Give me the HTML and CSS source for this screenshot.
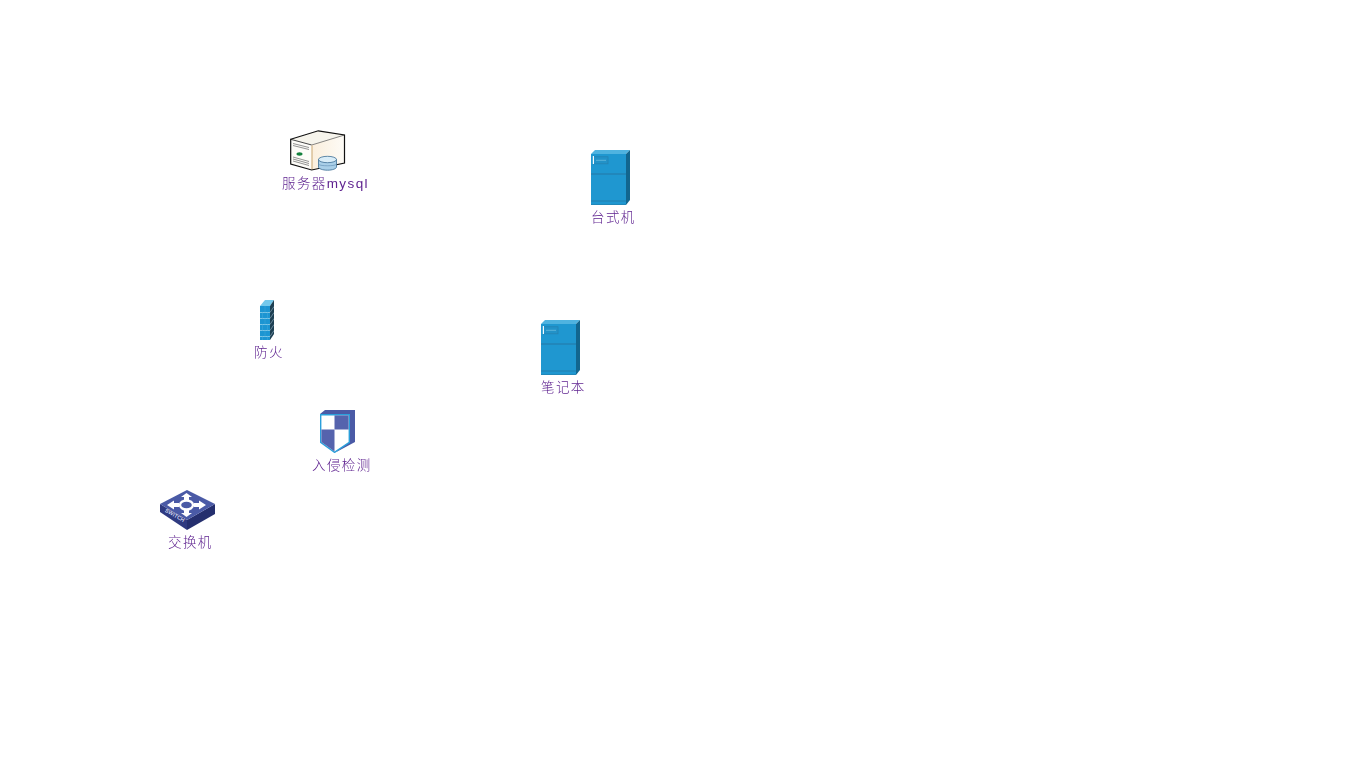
FILE: index.html
```html
<!DOCTYPE html>
<html lang="zh">
<head>
<meta charset="utf-8">
<title>网络拓扑</title>
<link rel="stylesheet" href="styles.css">
</head>
<body>
<main class="canvas">
  <svg class="defs" aria-hidden="true">
    <symbol id="cabinet" viewBox="0 0 39 55">
      <polygon points="0,4 4,0 39,0 35,4" fill="#4fb3e0"/>
      <polygon points="35,4 39,0 39,50 35,55" fill="#12668f"/>
      <rect x="0" y="4" width="35" height="51" fill="#1f97d0"/>
      <rect x="2.500" y="6.800" width="14.500" height="7" fill="#2292c8" stroke="#2582b2" stroke-width=".8"/>
      <rect x="1.800" y="6" width="1.200" height="8" fill="#f2fafd"/>
      <rect x="5" y="9.800" width="10" height="1" fill="#5cb4da"/>
      <rect x="0" y="23.500" width="35" height="1" fill="#2479a6"/>
      <rect x="0" y="50.500" width="35" height="1" fill="#2280ae"/>
      <rect x="0" y="54" width="35" height="1" fill="#2088b9"/>
    </symbol>
    <linearGradient id="server-side" x1="0" y1="0" x2="1" y2="0">
      <stop offset="0" stop-color="#fbefdd"/>
      <stop offset="1" stop-color="#fdfbf6"/>
    </linearGradient>
  </svg>

  <figure class="node node-server">
    <svg class="icon icon-server" viewBox="0 0 56 41">
      <polygon points="0.700,9.300 28.300,0.800 54.500,5 21.700,15" fill="#f6f4ec"/>
      <polygon points="21.700,15 54.500,5 54.500,33 21.700,40" fill="url(#server-side)"/>
      <polygon points="0.700,9.300 21.700,15 21.700,40 0.700,34" fill="#fdfcf8"/>
      <path d="M0.700 9.300L21.700 15" stroke="#333" stroke-width=".9" fill="none"/>
      <path d="M21.700 15L54.500 5" stroke="#555" stroke-width=".7" fill="none"/>
      <path d="M22 15.500V39.500" stroke="#d2b284" stroke-width="1.200"/>
      <path d="M0.700 9.300L28.300 0.800L54.500 5V33L21.700 40L0.700 34Z" stroke="#111" stroke-width="1.200" fill="none"/>
      <path d="M3 13.500l16 4M3 15.500l16 4M3 27l16 4.500M3 29l16 4.500M3 31l16 4.500" stroke="#666" stroke-width=".7" fill="none"/>
      <ellipse cx="9.500" cy="24" rx="3" ry="1.700" fill="#13803c"/>
      <path d="M28.500 29.500v7.500c0 1.700 4 3.200 9 3.200s9-1.500 9-3.200v-7.500z" fill="#a9cfe8" stroke="#3c6d94" stroke-width=".8"/>
      <ellipse cx="37.500" cy="29.500" rx="9" ry="3.200" fill="#d9edf8" stroke="#3c6d94" stroke-width=".8"/>
      <path d="M28.800 34.500c2 1.700 15.400 1.700 17.400 0" fill="none" stroke="#5e8cb0" stroke-width=".6"/>
    </svg>
    <figcaption class="label">服务器mysql</figcaption>
  </figure>

  <figure class="node node-desktop">
    <svg class="icon icon-cabinet"><use href="#cabinet"/></svg>
    <figcaption class="label">台式机</figcaption>
  </figure>

  <figure class="node node-firewall">
    <svg class="icon icon-firewall" viewBox="0 0 14 40">
      <polygon points="0,6 5,0 14,0 10,6" fill="#74c9ec"/>
      <polygon points="10,6 14,0 14,34 10,40" fill="#1d3f52"/>
      <rect x="0" y="6" width="10" height="34" fill="#1c95d2"/>
      <path d="M0 12.500H10M0 18.500H10M0 24.500H10M0 30.500H10M0 36.500H10" stroke="#86cbe9" stroke-width=".9" fill="none"/>
      <path d="M5 6V12.500M2.500 12.500V18.500M7.500 12.500V18.500M5 18.500V24.500M2.500 24.500V30.500M7.500 24.500V30.500M5 30.500V36.500M2.500 36.500V40M7.500 36.500V40" stroke="#3aa4d8" stroke-width=".6" fill="none"/>
      <path d="M10 12.500L14 6.500M10 18.500L14 12.500M10 24.500L14 18.500M10 30.500L14 24.500M10 36.500L14 30.500" stroke="#7f9dae" stroke-width=".8" fill="none"/>
    </svg>
    <figcaption class="label">防火</figcaption>
  </figure>

  <figure class="node node-notebook">
    <svg class="icon icon-cabinet"><use href="#cabinet"/></svg>
    <figcaption class="label">笔记本</figcaption>
  </figure>

  <figure class="node node-ids">
    <svg class="icon icon-shield" viewBox="0 0 35 43">
      <polygon points="0,4 5,0 35,0 35,32 14.500,43 29,32 29,4" fill="#4a5aa6"/>
      <polygon points="0.700,4.700 29.300,4.700 29.300,32.300 14.500,42.300 0.700,32.300" fill="#fff" stroke="#2a9fdb" stroke-width="1.400"/>
      <polygon points="14.500,5.400 28.600,5.400 28.600,19.500 14.500,19.500" fill="#5563ad"/>
      <polygon points="1.400,19.500 14.500,19.500 14.500,41.400 1.400,32" fill="#5563ad"/>
    </svg>
    <figcaption class="label">入侵检测</figcaption>
  </figure>

  <figure class="node node-switch">
    <svg class="icon icon-switch" viewBox="0 0 55 40">
      <polygon points="0,14 0,22 27,40 27,30" fill="#2f3a80"/>
      <polygon points="27,30 27,40 55,24 55,14" fill="#252f6e"/>
      <polygon points="0,14 27,0 55,14 27,30" fill="#4a5aa6"/>
      <g fill="#fff">
        <polygon points="26.500,3 32,7 29,7 29,10 24,10 24,7 21,7"/>
        <polygon points="26.500,27 32,23 29,23 29,20 24,20 24,23 21,23"/>
        <polygon points="7,15 14,10.500 14,13 19,13 19,17 14,17 14,19.500"/>
        <polygon points="46,15 39,10.500 39,13 34,13 34,17 39,17 39,19.500"/>
      </g>
      <ellipse cx="26.500" cy="15" rx="6.500" ry="4.500" fill="#4a5aa6" stroke="#fff" stroke-width="2.400"/>
      <text class="switch-text" transform="translate(4.500 21.500) rotate(30)">SWITCH</text>
    </svg>
    <figcaption class="label">交换机</figcaption>
  </figure>
</main>
</body>
</html>
```
FILE: styles.css
```css
html, body {
  margin: 0;
  height: 100%;
  background: #fff;
}

.canvas {
  position: relative;
  width: 1366px;
  height: 768px;
  overflow: hidden;
  font-family: "Liberation Sans", "Noto Sans CJK SC", sans-serif;
}

.defs {
  position: absolute;
  width: 0;
  height: 0;
}

.node {
  position: absolute;
  margin: 0;
  display: flex;
  flex-direction: column;
  align-items: flex-start;
}

.icon {
  display: block;
  flex: none;
}

.label {
  color: #5f2390;
  font-size: 13.500px;
  font-weight: 300;
  line-height: 18px;
  letter-spacing: 1.400px;
  white-space: nowrap;
  will-change: transform;
}

.icon-server { width: 56px; height: 41px; }
.icon-cabinet { width: 39px; height: 55px; }
.icon-firewall { width: 14px; height: 40px; }
.icon-shield { width: 35px; height: 43px; }
.icon-switch { width: 55px; height: 40px; }

.switch-text {
  font-family: "Liberation Sans", sans-serif;
  font-size: 5.500px;
  font-weight: 700;
  fill: #cdd3ee;
}

.node-server { left: 290px; top: 130px; }
.node-server .label { margin: 4px 0 0 -8px; }

.node-desktop { left: 591px; top: 150px; }
.node-desktop .label { margin-top: 4px; }

.node-firewall { left: 260px; top: 300px; }
.node-firewall .label { margin: 4px 0 0 -6px; }

.node-notebook { left: 541px; top: 320px; }
.node-notebook .label { margin-top: 4px; }

.node-ids { left: 320px; top: 410px; }
.node-ids .label { margin: 4px 0 0 -8px; }

.node-switch { left: 160px; top: 490px; }
.node-switch .label { margin: 4px 0 0 8px; }
```
